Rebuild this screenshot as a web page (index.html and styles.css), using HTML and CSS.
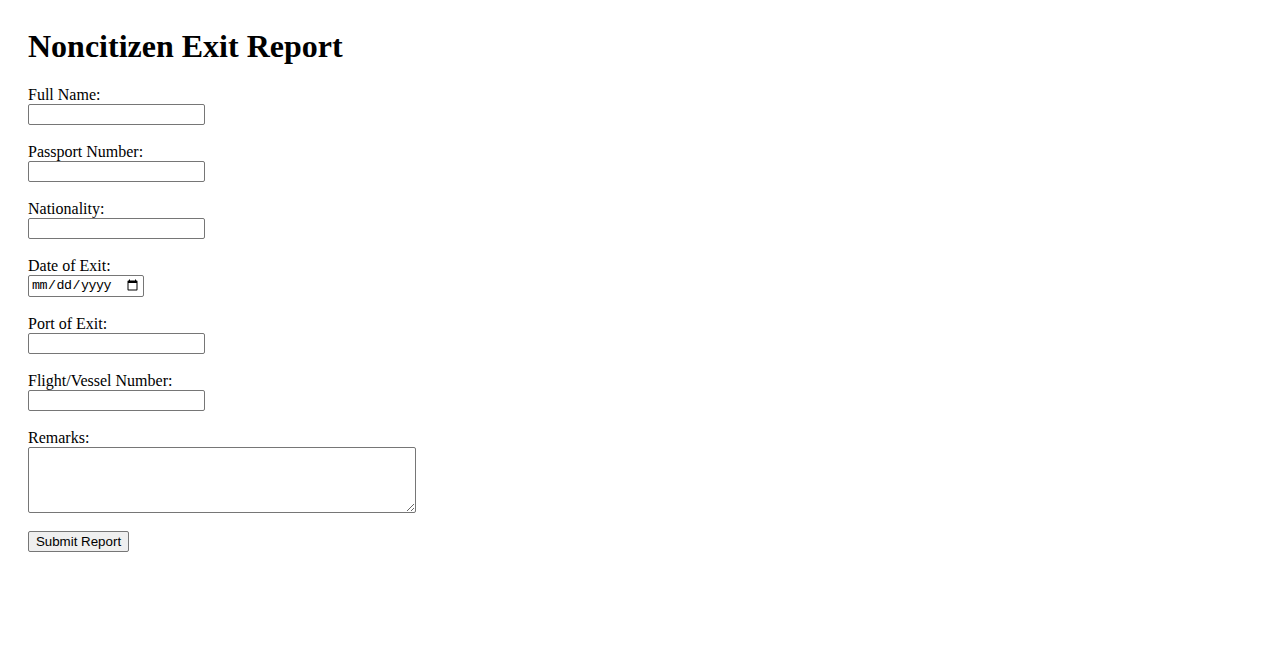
FILE: index.html
```html
<!DOCTYPE html>
<html lang="en">
<head>
<meta charset="utf-8">
<title>Noncitizen Exit Report</title>
<link rel="stylesheet" href="styles.css">
</head>
<body>
<h1 class="title">Noncitizen Exit Report</h1>
<form class="report-form">
  <div class="field">
    <label class="field-label" for="name">Full Name:</label>
    <input class="text-input" type="text" id="name">
  </div>
  <div class="field">
    <label class="field-label" for="passport">Passport Number:</label>
    <input class="text-input" type="text" id="passport">
  </div>
  <div class="field">
    <label class="field-label" for="nationality">Nationality:</label>
    <input class="text-input" type="text" id="nationality">
  </div>
  <div class="field">
    <label class="field-label" for="date">Date of Exit:</label>
    <input class="date-input" type="date" id="date">
  </div>
  <div class="field">
    <label class="field-label" for="port">Port of Exit:</label>
    <input class="text-input" type="text" id="port">
  </div>
  <div class="field">
    <label class="field-label" for="flight">Flight/Vessel Number:</label>
    <input class="text-input" type="text" id="flight">
  </div>
  <div class="field">
    <label class="field-label" for="remarks">Remarks:</label>
    <textarea class="remarks" id="remarks"></textarea>
  </div>
  <button class="submit-btn" type="submit">Submit Report</button>
</form>
</body>
</html>
```
FILE: styles.css
```css
html, body {
  background: #ffffff;
}
body {
  margin: 0;
  padding: 28px;
  font-family: "Liberation Serif", "Times New Roman", serif;
  font-size: 16px;
  color: #000000;
}
.title {
  margin: 0 0 21px 0;
  font-size: 32px;
  line-height: 37px;
  font-weight: bold;
}
.report-form {
  display: flex;
  flex-direction: column;
  align-items: flex-start;
}
.field {
  display: flex;
  flex-direction: column;
  align-items: flex-start;
  margin-bottom: 18px;
}
.field-label {
  line-height: 18px;
  height: 18px;
}
.text-input,
.date-input,
.remarks {
  box-sizing: border-box;
  margin: 0;
  border: 1px solid #767676;
  border-radius: 2px;
  background: #ffffff;
  font-family: "Liberation Sans", Arial, sans-serif;
  font-size: 13.33px;
  padding: 1px 2px;
}
.text-input {
  width: 177px;
  height: 21px;
}
.date-input {
  width: 116px;
  height: 22px;
  font-family: "Liberation Mono", monospace;
  font-size: 13.33px;
  letter-spacing: -0.5px;
  padding: 1px 2px;
}
.remarks {
  width: 388px;
  height: 66px;
  resize: both;
  display: block;
}
.submit-btn {
  box-sizing: border-box;
  margin: 0;
  width: 101px;
  height: 21px;
  padding: 1px 6px;
  border: 1px solid #767676;
  border-radius: 2px;
  background: #efefef;
  font-family: "Liberation Sans", Arial, sans-serif;
  font-size: 13.33px;
  color: #000000;
}
```
